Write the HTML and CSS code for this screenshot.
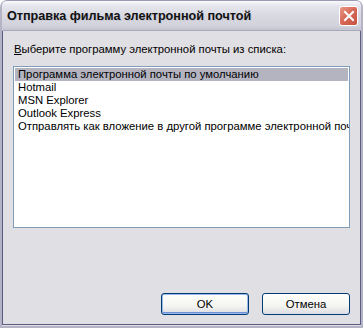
FILE: index.html
```html
<!DOCTYPE html>
<html lang="ru">
<head>
  <meta charset="UTF-8">
  <title>Отправка фильма электронной почтой</title>
  <link rel="stylesheet" href="styles.css">
</head>
<body>

<div class="window">
  <div class="titlebar">
    <span class="title">Отправка фильма электронной почтой</span>
    <span class="close">
      <svg width="12" height="12" viewBox="0 0 12 12">
        <path d="M2 2 L10 10 M10 2 L2 10" stroke="#fff" stroke-width="2" stroke-linecap="square"/>
      </svg>
    </span>
  </div>

  <div class="content">
    <p class="label"><u>В</u>ыберите программу электронной почты из списка:</p>

    <ul class="list">
      <li class="selected">Программа электронной почты по умолчанию</li>
      <li>Hotmail</li>
      <li>MSN Explorer</li>
      <li>Outlook Express</li>
      <li>Отправлять как вложение в другой программе электронной почты</li>
    </ul>

    <div class="buttons">
      <button class="btn default">OK</button>
      <button class="btn">Отмена</button>
    </div>
  </div>
</div>

</body>
</html>
```

FILE: styles.css
```css
body {
  margin: 0;
  background: #fff;
  font-family: 'Liberation Sans', Arial, sans-serif;
  font-size: 11.3px;
  color: #000;
}

.window {
  width: 363px;
  height: 328px;
  box-sizing: border-box;
  background: #e0dfe3;
  border-radius: 7px 7px 0 0;
  border: 2px solid #b4b4c6;
  border-top: 0;
  display: flex;
  flex-direction: column;
  overflow: hidden;
}

.titlebar {
  height: 29px;
  margin: 0 -2px;
  display: flex;
  align-items: center;
  padding: 0 5px 0 7px;
  background: linear-gradient(#fbfbfd 0%, #e6e6ee 15%, #d9d9e2 50%, #d2d2dc 85%, #c4c4d2 100%);
  border-top: 1px solid #9a9ab0;
  border-radius: 7px 7px 0 0;
  border-bottom: 1px solid #a8a8bc;
}

.title {
  flex: 1;
  font-weight: bold;
  font-size: 12.6px;
  color: #111;
  text-shadow: 1px 1px 0 #c8c8d4;
}

.close {
  width: 19px;
  height: 20px;
  box-sizing: border-box;
  display: flex;
  align-items: center;
  justify-content: center;
  border: 1px solid #fff;
  border-radius: 3px;
  background: linear-gradient(135deg, #e89a88 0%, #d86a58 45%, #c4503f 100%);
}

.content {
  flex: 1;
  display: flex;
  flex-direction: column;
  padding: 0 10px 0 10px;
  border-left: 1px solid #5c5c80;
  border-right: 1px solid #5c5c80;
  border-bottom: 1px solid #5c5c80;
  margin-bottom: 1px;
}

.label {
  margin: 12px 0 0 1px;
  line-height: 13px;
}

.label u {
  text-decoration: underline;
}

.list {
  list-style: none;
  margin: 10px 0 0 0;
  padding: 1px;
  height: 158px;
  background: #fff;
  border: 1px solid #7f9db9;
  overflow: hidden;
}

.list li {
  height: 13px;
  line-height: 13px;
  padding-left: 3px;
  white-space: nowrap;
}

.list li.selected {
  background: #b4b4c0;
}

.buttons {
  display: flex;
  justify-content: flex-end;
  gap: 13px;
  margin-top: 65px;
}

.btn {
  width: 88px;
  height: 22px;
  font-family: 'Liberation Sans', Arial, sans-serif;
  font-size: 11.3px;
  color: #000;
  border: 1px solid #003c74;
  border-radius: 3px;
  background: linear-gradient(#ffffff 0%, #f4f4f0 60%, #dcdce4 100%);
  padding: 0;
}

.btn.default {
  box-shadow: inset 0 0 0 1px #98b8ea, inset 0 -1px 0 1px #6e90d8;
}
```
